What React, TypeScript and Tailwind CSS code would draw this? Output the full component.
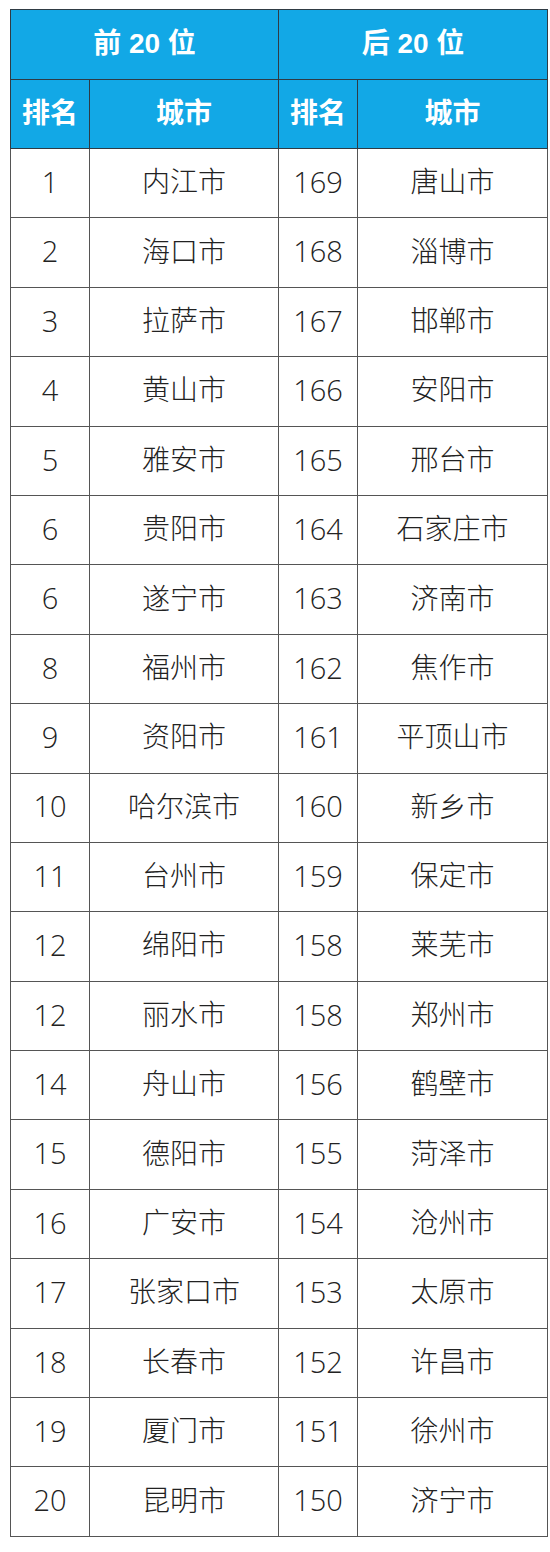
import React from "react";

const left: [string, string][] = [
  ["1", "内江市"], ["2", "海口市"], ["3", "拉萨市"], ["4", "黄山市"], ["5", "雅安市"],
  ["6", "贵阳市"], ["6", "遂宁市"], ["8", "福州市"], ["9", "资阳市"], ["10", "哈尔滨市"],
  ["11", "台州市"], ["12", "绵阳市"], ["12", "丽水市"], ["14", "舟山市"], ["15", "德阳市"],
  ["16", "广安市"], ["17", "张家口市"], ["18", "长春市"], ["19", "厦门市"], ["20", "昆明市"],
];
const right: [string, string][] = [
  ["169", "唐山市"], ["168", "淄博市"], ["167", "邯郸市"], ["166", "安阳市"], ["165", "邢台市"],
  ["164", "石家庄市"], ["163", "济南市"], ["162", "焦作市"], ["161", "平顶山市"], ["160", "新乡市"],
  ["159", "保定市"], ["158", "莱芜市"], ["158", "郑州市"], ["156", "鹤壁市"], ["155", "菏泽市"],
  ["154", "沧州市"], ["153", "太原市"], ["152", "许昌市"], ["151", "徐州市"], ["150", "济宁市"],
];

const cjk = '"Liberation Sans", "Noto Sans CJK SC", sans-serif';
const num = '"Open Sans", "Liberation Sans", sans-serif';

export default function App() {
  return (
    <div className="w-[550px] h-[1552px] bg-white pt-[9px] pl-[10px]">
      <table
        className="table-fixed border-collapse w-[537px] text-center"
        style={{ fontFamily: cjk }}
      >
        <colgroup>
          <col className="w-[79px]" />
          <col className="w-[189px]" />
          <col className="w-[79px]" />
          <col className="w-[190px]" />
        </colgroup>
        <thead>
          <tr className="h-[69.5px] bg-[#12a8e6] text-white font-bold text-[28px]">
            <th colSpan={2} className="border border-[#2f3b44] p-0">前 20 位</th>
            <th colSpan={2} className="border border-[#2f3b44] p-0">后 20 位</th>
          </tr>
          <tr className="h-[69.5px] bg-[#12a8e6] text-white font-bold text-[28px]">
            <th className="border border-[#2f3b44] p-0">排名</th>
            <th className="border border-[#2f3b44] p-0">城市</th>
            <th className="border border-[#2f3b44] p-0">排名</th>
            <th className="border border-[#2f3b44] p-0">城市</th>
          </tr>
        </thead>
        <tbody className="text-[#222] text-[28px]">
          {left.map((l, i) => (
            <tr key={i} className="h-[69.4px]">
              <td className="border border-[#555] p-0 pb-[3px] font-light text-[29px]" style={{ fontFamily: num }}>{l[0]}</td>
              <td className="border border-[#555] p-0 font-light">{l[1]}</td>
              <td className="border border-[#555] p-0 pb-[3px] font-light text-[29px]" style={{ fontFamily: num }}>{right[i][0]}</td>
              <td className="border border-[#555] p-0 font-light">{right[i][1]}</td>
            </tr>
          ))}
        </tbody>
      </table>
    </div>
  );
}
